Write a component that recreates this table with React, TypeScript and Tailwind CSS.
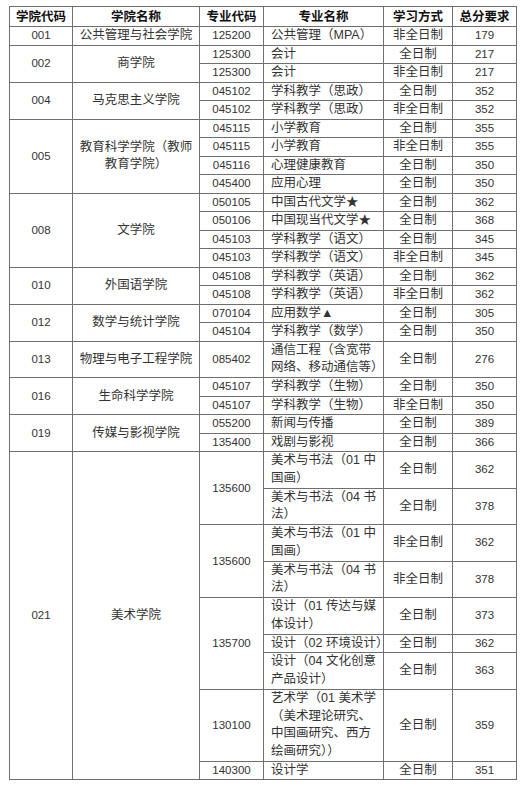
type Row = {
  pcode?: string;
  span?: number;
  name: string[];
  mode: string;
  score: string;
};

type College = { code: string; name: string[]; rows: Row[] };

const colleges: College[] = [
  { code: '001', name: ['公共管理与社会学院'], rows: [{ pcode: '125200', name: ['公共管理（MPA）'], mode: '非全日制', score: '179' }] },
  {
    code: '002',
    name: ['商学院'],
    rows: [
      { pcode: '125300', name: ['会计'], mode: '全日制', score: '217' },
      { pcode: '125300', name: ['会计'], mode: '非全日制', score: '217' },
    ],
  },
  {
    code: '004',
    name: ['马克思主义学院'],
    rows: [
      { pcode: '045102', name: ['学科教学（思政）'], mode: '全日制', score: '352' },
      { pcode: '045102', name: ['学科教学（思政）'], mode: '非全日制', score: '352' },
    ],
  },
  {
    code: '005',
    name: ['教育科学学院（教师', '教育学院）'],
    rows: [
      { pcode: '045115', name: ['小学教育'], mode: '全日制', score: '355' },
      { pcode: '045115', name: ['小学教育'], mode: '非全日制', score: '355' },
      { pcode: '045116', name: ['心理健康教育'], mode: '全日制', score: '350' },
      { pcode: '045400', name: ['应用心理'], mode: '全日制', score: '350' },
    ],
  },
  {
    code: '008',
    name: ['文学院'],
    rows: [
      { pcode: '050105', name: ['中国古代文学★'], mode: '全日制', score: '362' },
      { pcode: '050106', name: ['中国现当代文学★'], mode: '全日制', score: '368' },
      { pcode: '045103', name: ['学科教学（语文）'], mode: '全日制', score: '345' },
      { pcode: '045103', name: ['学科教学（语文）'], mode: '非全日制', score: '345' },
    ],
  },
  {
    code: '010',
    name: ['外国语学院'],
    rows: [
      { pcode: '045108', name: ['学科教学（英语）'], mode: '全日制', score: '362' },
      { pcode: '045108', name: ['学科教学（英语）'], mode: '非全日制', score: '362' },
    ],
  },
  {
    code: '012',
    name: ['数学与统计学院'],
    rows: [
      { pcode: '070104', name: ['应用数学▲'], mode: '全日制', score: '305' },
      { pcode: '045104', name: ['学科教学（数学）'], mode: '全日制', score: '350' },
    ],
  },
  {
    code: '013',
    name: ['物理与电子工程学院'],
    rows: [{ pcode: '085402', name: ['通信工程（含宽带', '网络、移动通信等）'], mode: '全日制', score: '276' }],
  },
  {
    code: '016',
    name: ['生命科学学院'],
    rows: [
      { pcode: '045107', name: ['学科教学（生物）'], mode: '全日制', score: '350' },
      { pcode: '045107', name: ['学科教学（生物）'], mode: '非全日制', score: '350' },
    ],
  },
  {
    code: '019',
    name: ['传媒与影视学院'],
    rows: [
      { pcode: '055200', name: ['新闻与传播'], mode: '全日制', score: '389' },
      { pcode: '135400', name: ['戏剧与影视'], mode: '全日制', score: '366' },
    ],
  },
  {
    code: '021',
    name: ['美术学院'],
    rows: [
      { pcode: '135600', span: 2, name: ['美术与书法（01 中', '国画）'], mode: '全日制', score: '362' },
      { name: ['美术与书法（04 书', '法）'], mode: '全日制', score: '378' },
      { pcode: '135600', span: 2, name: ['美术与书法（01 中', '国画）'], mode: '非全日制', score: '362' },
      { name: ['美术与书法（04 书', '法）'], mode: '非全日制', score: '378' },
      { pcode: '135700', span: 3, name: ['设计（01 传达与媒', '体设计）'], mode: '全日制', score: '373' },
      { name: ['设计（02 环境设计）'], mode: '全日制', score: '362' },
      { name: ['设计（04 文化创意', '产品设计）'], mode: '全日制', score: '363' },
      {
        pcode: '130100',
        name: ['艺术学（01 美术学', '（美术理论研究、', '中国画研究、西方', '绘画研究））'],
        mode: '全日制',
        score: '359',
      },
      { pcode: '140300', name: ['设计学'], mode: '全日制', score: '351' },
    ],
  },
];

const rowH = (n: number) => (n === 1 ? 'h-[18.5px]' : n === 2 ? 'h-[36.5px]' : 'h-[72px]');

const cell = 'border border-[#6f6f6f] p-0 align-middle';
const num = 'font-["Liberation_Sans"] text-[11.5px]';

function Lines({ lines }: { lines: string[] }) {
  return (
    <>
      {lines.map((l, i) => (
        <div key={i} className={lines.length > 1 ? 'leading-[17.5px] whitespace-nowrap' : 'leading-[17px] whitespace-nowrap'}>
          {l}
        </div>
      ))}
    </>
  );
}

export default function App() {
  return (
    <div className="bg-white min-h-screen pt-[6px] pl-[9px] font-['Liberation_Sans','Noto_Sans_CJK_SC',sans-serif] text-[12.5px] leading-[17px] text-[#333]">
      <table className="table-fixed border-collapse w-[507px]">
        <colgroup>
          <col className="w-[63px]" />
          <col className="w-[127px]" />
          <col className="w-[64px]" />
          <col className="w-[120px]" />
          <col className="w-[69px]" />
          <col className="w-[64px]" />
        </colgroup>
        <thead>
          <tr className="h-[20px] font-bold text-[#111]">
            {['学院代码', '学院名称', '专业代码', '专业名称', '学习方式', '总分要求'].map((h) => (
              <th key={h} className={`${cell} text-center leading-[18px]`}>
                {h}
              </th>
            ))}
          </tr>
        </thead>
        <tbody>
          {colleges.map((c) =>
            c.rows.map((r, i) => (
              <tr key={c.code + i} className={rowH(r.name.length)}>
                {i === 0 && (
                  <>
                    <td rowSpan={c.rows.length} className={`${cell} ${num} text-center`}>
                      {c.code}
                    </td>
                    <td rowSpan={c.rows.length} className={`${cell} text-center`}>
                      <Lines lines={c.name} />
                    </td>
                  </>
                )}
                {r.pcode && (
                  <td rowSpan={r.span ?? 1} className={`${cell} ${num} text-center`}>
                    {r.pcode}
                  </td>
                )}
                <td className={`${cell} pl-[7px] text-left`}>
                  <Lines lines={r.name} />
                </td>
                <td className={`${cell} text-center`}>{r.mode}</td>
                <td className={`${cell} ${num} text-center`}>{r.score}</td>
              </tr>
            )),
          )}
        </tbody>
      </table>
    </div>
  );
}
